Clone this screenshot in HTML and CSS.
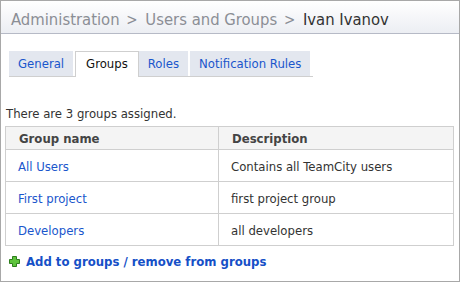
FILE: index.html
```html
<!DOCTYPE html>
<html>
<head>
<meta charset="utf-8">
<link rel="stylesheet" href="styles.css">
</head>
<body>
<div class="frame">
  <div class="header">
    <span class="crumb">Administration</span>
    <span class="sep">&gt;</span>
    <span class="crumb">Users and Groups</span>
    <span class="sep">&gt;</span>
    <span class="current">Ivan Ivanov</span>
  </div>
  <div class="content">
    <div class="tabs">
      <a class="tab tab-general">General</a>
      <a class="tab tab-active">Groups</a>
      <a class="tab tab-roles">Roles</a>
      <a class="tab">Notification Rules</a>
    </div>
    <p class="summary">There are 3 groups assigned.</p>
    <table class="groups">
      <thead>
        <tr><th class="col-name">Group name</th><th>Description</th></tr>
      </thead>
      <tbody>
        <tr><td><a class="link">All Users</a></td><td>Contains all TeamCity users</td></tr>
        <tr><td><a class="link">First project</a></td><td>first project group</td></tr>
        <tr><td><a class="link">Developers</a></td><td>all developers</td></tr>
      </tbody>
    </table>
    <div class="actions">
      <svg class="plus" width="11" height="11" viewBox="0 0 11 11">
        <path d="M3.5 0.5h4v3h3v4h-3v3h-4v-3h-3v-4h3z" fill="#5ec43c" stroke="#2d7d1c" stroke-width="1"/>
      </svg>
      <a class="action-link">Add to groups / remove from groups</a>
    </div>
  </div>
</div>
</body>
</html>
```

FILE: styles.css
```css
* { box-sizing: border-box; }
html, body { margin: 0; padding: 0; background: #fff; }
body {
  font-family: "DejaVu Sans Condensed", "DejaVu Sans", sans-serif;
  font-stretch: condensed;
  font-size: 13px;
  color: #333;
}
.frame {
  width: 460px;
  height: 282px;
  border: 1px solid #a8a8a8;
  overflow: hidden;
}
.header {
  height: 33px;
  padding: 8px 0 0 10px;
  line-height: 22px;
  font-size: 16.5px;
  background: linear-gradient(#ffffff, #eceef3);
  border-bottom: 1px solid #b6bac6;
  white-space: nowrap;
}
.crumb { color: #8b8e95; }
.sep { color: #8b8e95; margin: 0 3px 0 2px; font-size: 15px; }
.current { color: #333; }
.content { padding: 17px 0 0 4px; }
.tabs {
  display: inline-flex;
  margin-left: 4px;
  border-bottom: 1px solid #cfcfcf;
  padding-right: 1px;
}
.tab {
  display: block;
  height: 25px;
  line-height: 25px;
  padding: 0 9px;
  background: #e3e7ef;
  color: #1a56cc;
  margin-right: 2px;
  white-space: nowrap;
}
.tab-active {
  background: #fff;
  color: #111;
  border: 1px solid #cfcfcf;
  border-bottom: none;
  line-height: 24px;
  margin-right: 0;
  margin-bottom: -1px;
  height: 26px;
  padding: 0 10px;
}
.summary {
  margin: 0;
  padding: 29px 0 0 1px;
  line-height: 16px;
}
.groups {
  margin-top: 4px;
  width: 449px;
  border-collapse: collapse;
  border: 1px solid #cfcfcf;
}
.groups th {
  background: #f4f4f4;
  text-align: left;
  font-weight: bold;
  color: #444;
  height: 23px;
  padding: 0 13px;
  border: 1px solid #cfcfcf;
}
.groups th.col-name { width: 213px; }
.groups td {
  height: 32px;
  padding: 2px 12px 0 12px;
  border: 1px solid #cfcfcf;
}
.groups td:first-child { width: 213px; }
.link { color: #1a56cc; }
.actions {
  display: flex;
  align-items: center;
  gap: 6px;
  padding: 8px 0 0 4px;
}
.plus { display: block; margin-top: -1px; }
.action-link {
  color: #1650c7;
  font-weight: bold;
  font-size: 13px;
}
```
